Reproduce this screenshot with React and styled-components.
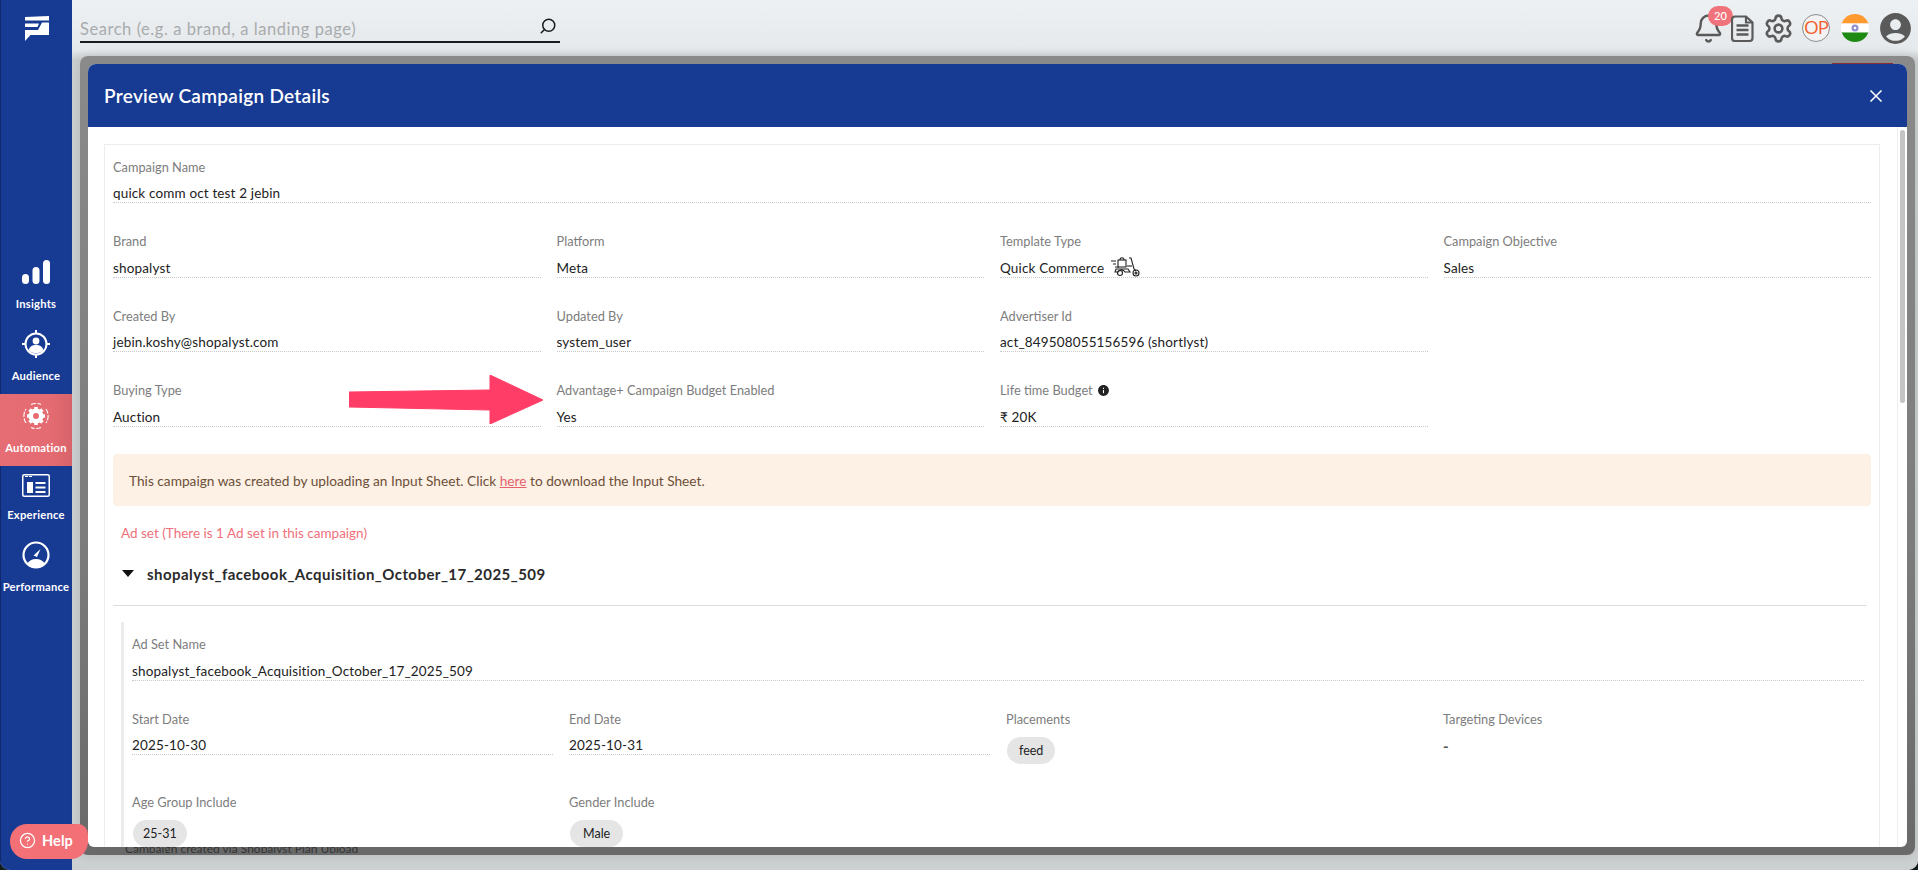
import React from "react";
import styled, { createGlobalStyle } from "styled-components";
import { Bell, Search, Settings, CircleHelp, X } from "lucide-react";
import { MdAccountCircle, MdInfo } from "react-icons/md";

const GlobalStyle = createGlobalStyle`
  html, body {
    margin: 0;
    padding: 0;
    height: 100%;
    overflow: hidden;
    background: #101c1c;
    font-family: Lato, "Open Sans", sans-serif;
  }
  * {
    box-sizing: border-box;
  }
`;

const Shell = styled.div`
  position: relative;
  display: flex;
  width: 1918px;
  height: 870px;
  overflow: hidden;
  border-radius: 0 0 10px 10px;
  background: #ccd0d0;
`;

const Sidebar = styled.aside`
  flex: 0 0 72px;
  display: flex;
  flex-direction: column;
  align-items: center;
  padding-top: 16px;
  background: #173a93;
  border-left: 1px solid #10296e;
  color: #fff;
`;

const LogoBox = styled.div`
  height: 25px;
  width: 24px;
  margin-bottom: 209px;
`;

const NavItem = styled.div`
  width: 72px;
  margin-left: -1px;
  height: ${(p) => (p.$tight ? "67px" : "72px")};
  padding-top: ${(p) => (p.$tight ? "5px" : "8px")};
  display: flex;
  flex-direction: column;
  align-items: center;
  background: ${(p) =>
    p.$active ? "linear-gradient(90deg, #e66d73, #e46b71 70%, #d8636a)" : "transparent"};
`;

const NavIcon = styled.div`
  height: 28px;
  display: flex;
  align-items: center;
  justify-content: center;
`;

const NavLabel = styled.div`
  margin-top: ${(p) => (p.$tight ? "8px" : "10px")};
  font-size: 11.2px;
  line-height: 16px;
  font-weight: 700;
  letter-spacing: 0.25px;
  white-space: nowrap;
`;

const Main = styled.main`
  flex: 1;
  min-width: 0;
  display: flex;
  flex-direction: column;
  background: linear-gradient(180deg, #eef1f3 0, #e6e9eb 50px, #ccd0d0 60px);
`;

const TopBar = styled.header`
  flex: 0 0 56px;
  display: flex;
  justify-content: space-between;
  padding: 13px 8px 0 8px;
`;

const SearchBox = styled.div`
  width: 480px;
  height: 30px;
  display: flex;
  align-items: center;
  justify-content: space-between;
  padding: 3px 3px 0 0;
  border-bottom: 2px solid #1b1b1b;
`;

const SearchHint = styled.span`
  font-size: 16.5px;
  letter-spacing: 0.55px;
  color: #a8abad;
`;

const FlippedSearch = styled(Search)`
  transform: scaleX(-1);
  margin-top: -5px;
  color: #1b1b1b;
`;

const TopIcons = styled.div`
  display: flex;
  align-items: flex-start;
  gap: 11px;
`;

const IconSlot = styled.div`
  position: relative;
  width: ${(p) => p.$w}px;
  height: 30px;
  display: flex;
  align-items: center;
  justify-content: center;
  color: #5a5a5a;

  svg {
    flex-shrink: 0;
  }
`;

const Badge = styled.span`
  position: absolute;
  top: -7px;
  left: 11px;
  width: 25px;
  height: 20px;
  border-radius: 10px;
  background: #f0737b;
  color: #fff;
  font-size: 11px;
  font-weight: 500;
  line-height: 20px;
  text-align: center;
`;

const OpCircle = styled.div`
  width: 28px;
  height: 28px;
  border-radius: 50%;
  border: 1px solid #8c8c8c;
  background: #f3f3f3;
  color: #f0602f;
  font-family: "Open Sans", sans-serif;
  font-size: 19px;
  font-weight: 400;
  line-height: 25px;
  letter-spacing: -1px;
  text-align: center;
  overflow: hidden;
  white-space: nowrap;
`;

const Backdrop = styled.section`
  position: relative;
  height: 799px;
  margin-right: 3px;
  margin-left: 8px;
  padding: 8px;
  border-radius: 8px;
  background: linear-gradient(180deg, #8a8a8a 0, #7c7c7c 60%, #696969 100%);
  box-shadow: 0 0 12px rgba(0, 0, 0, 0.12);
`;

const PeekText = styled.div`
  position: absolute;
  left: 45px;
  bottom: 2px;
  height: 6px;
  font-size: 12px;
  line-height: 3px;
  overflow: hidden;
  color: #333;
`;

const PeekButton = styled.div`
  position: absolute;
  top: 7px;
  right: 22px;
  width: 61px;
  height: 2px;
  background: #8a2b33;
`;

const Modal = styled.div`
  position: relative;
  height: 100%;
  display: flex;
  flex-direction: column;
  border-radius: 8px 8px 6px 6px;
  background: #fff;
  overflow: hidden;
`;

const ModalHeader = styled.div`
  flex: 0 0 63px;
  display: flex;
  align-items: center;
  justify-content: space-between;
  padding: 0 21px 0 16px;
  background: #173a93;
  color: #fff;
`;

const ModalTitle = styled.h1`
  margin: 0;
  font-size: 19px;
  font-weight: 600;
  letter-spacing: 0.3px;
`;

const ModalBody = styled.div`
  flex: 1;
  min-height: 0;
  display: flex;
`;

const ScrollArea = styled.div`
  flex: 1;
  min-width: 0;
  overflow: hidden;
  padding: 17px 17px 0 16px;
`;

const Gutter = styled.div`
  flex: 0 0 10px;
  padding: 3px 2px 0;
  border-left: 1px solid #f0f0f0;
`;

const Thumb = styled.div`
  height: 273px;
  border-radius: 3px;
  background: #c4c4c4;
`;

const DetailBox = styled.div`
  border: 1px solid #ececec;
  border-bottom: none;
  padding: 12.5px 8px 0;
  min-height: 720px;
`;

const FieldGrid = styled.div`
  display: grid;
  grid-template-columns: repeat(4, 1fr);
  column-gap: 16px;
  row-gap: 29.1px;
  align-items: start;
`;

const Field = styled.div`
  grid-column: ${(p) => (p.$full ? "1 / -1" : "auto")};
  min-width: 0;
`;

const Label = styled.div`
  display: flex;
  align-items: center;
  gap: 4px;
  height: 18px;
  font-size: 12.8px;
  line-height: 18px;
  color: #7d7d7d;
`;

const Value = styled.div`
  display: flex;
  align-items: center;
  gap: 7px;
  height: 18px;
  margin-top: 9.5px;
  border-bottom: 1px dotted #c9c9c9;
  font-size: 13.5px;
  line-height: 17px;
  letter-spacing: 0.15px;
  color: #222;

  svg {
    margin-top: -3px;
  }
`;

const Note = styled.div`
  height: 52px;
  margin-top: 27.5px;
  padding: 0 16px;
  display: flex;
  align-items: center;
  border-radius: 4px;
  background: #fdf1e5;
  color: #6c4f38;
  font-size: 13.7px;
  white-space: pre;
`;

const NoteLink = styled.a`
  color: #e5626c;
  text-decoration: underline;
`;

const AdSetHeading = styled.div`
  margin: 18px 0 0 8px;
  font-size: 13.5px;
  line-height: 18px;
  color: #f1707a;
`;

const AccordionRow = styled.div`
  display: flex;
  align-items: center;
  gap: 13px;
  height: 64px;
  padding: 0 0 0 9px;
  margin-right: 4px;
  border-bottom: 1px solid #dedede;
  font-size: 15px;
  font-weight: 700;
  letter-spacing: 0.45px;
  color: #2a2a2a;
`;

const Caret = styled.span`
  width: 0;
  height: 0;
  border-left: 6px solid transparent;
  border-right: 6px solid transparent;
  border-top: 7px solid #111;
`;

const AdSetBody = styled.div`
  margin: 16px 7px 0 8px;
  padding: 13px 0 0 8px;
  border-left: 3px solid #ececec;
`;

const ChipRow = styled.div`
  display: flex;
  gap: 6px;
  margin-top: 9px;
`;

const Chip = styled.span`
  height: 27px;
  padding: 0 ${(p) => p.$pad || 12}px;
  margin-left: 1px;
  border-radius: 14px;
  background: #e5e5e5;
  color: #222;
  font-size: 12.5px;
  line-height: 27px;
`;

const Dash = styled.div`
  margin-top: 9px;
  font-size: 15px;
  font-weight: 700;
  line-height: 18px;
  color: #555;
`;

const HelpButton = styled.button`
  position: absolute;
  left: 10px;
  top: 824px;
  width: 78px;
  height: 35px;
  display: flex;
  align-items: center;
  gap: 6px;
  padding: 0 0 2px 9px;
  border: none;
  border-radius: 17px 10px 17px 17px;
  background: #f27076;
  color: #fff;
  font-family: inherit;
  font-size: 14.5px;
  font-weight: 700;
  letter-spacing: 0.1px;
`;

const ArrowOverlay = styled.svg`
  position: absolute;
  left: 349px;
  top: 375px;
`;

const Logo = () => (
  <svg width="24" height="25" viewBox="0 0 24 25" fill="#fff">
    <path d="M0 1 L24 0 V4.500 H0 Z" />
    <path d="M0 7.500 H14 L12.500 11 H0 Z" />
    <path d="M0 14 H13 L17 6.500 H24 V19 H5.500 L0 25 Z" />
  </svg>
);

const InsightsIcon = () => (
  <svg width="28" height="24" viewBox="0 0 28 24" fill="#fff">
    <rect x="0" y="14" width="7" height="10" rx="3.5" />
    <rect x="10.5" y="7" width="7" height="17" rx="3.5" />
    <rect x="21" y="0" width="7" height="24" rx="3.5" />
  </svg>
);

const AudienceIcon = () => (
  <svg width="28" height="28" viewBox="0 0 28 28" fill="none" stroke="#fff" strokeWidth="2">
    <circle cx="14" cy="14" r="10.5" />
    <path d="M14 0v4M14 24v4M0 14h4M24 14h4" />
    <circle cx="14" cy="11" r="3.4" fill="#fff" stroke="none" />
    <path d="M6.5 20c1.5-4 4-5 7.5-5s6 1 7.5 5c-2 2.2-4.500 3.300-7.500 3.300S8.500 22.200 6.500 20z" fill="#fff" stroke="none" />
  </svg>
);

const AutomationIcon = () => (
  <svg width="28" height="28" viewBox="0 0 28 28" fill="none">
    <path d="M4 21A12.500 12.500 0 0 1 4 7M9 2.500A12.500 12.500 0 0 1 19 2.500M24 7A12.500 12.500 0 0 1 24 21M19 25.500A12.500 12.500 0 0 1 9 25.500" stroke="#fff" strokeWidth="1.1" strokeDasharray="5 1.500" />
    <circle cx="14" cy="14" r="5.500" stroke="#fff" strokeWidth="4" />
    <path d="M14 5v18M5 14h18M7.600 7.600l12.800 12.800M20.400 7.600L7.600 20.400" stroke="#fff" strokeWidth="3.500" />
    <circle cx="14" cy="14" r="3" fill="#e56c72" />
  </svg>
);

const ExperienceIcon = () => (
  <svg width="28" height="23" viewBox="0 0 28 23" fill="none">
    <rect x="0.750" y="0.750" width="26.500" height="21.500" rx="1.500" stroke="#fff" strokeWidth="1.500" />
    <path d="M3 2.500h3M7 2.500h3" stroke="#fff" strokeWidth="1.200" />
    <rect x="5" y="8" width="6" height="11" fill="#fff" />
    <path d="M13.500 9h10M13.500 13.500h10M13.500 18h10" stroke="#fff" strokeWidth="2" />
  </svg>
);

const PerformanceIcon = () => (
  <svg width="28" height="28" viewBox="0 0 28 28" fill="none">
    <circle cx="14" cy="14" r="12.500" stroke="#fff" strokeWidth="2.200" />
    <path d="M5 23c2-3.500 5-5 9-5s7 1.500 9 5c-2.500 2.500-5.500 4-9 4s-6.500-1.500-9-4z" fill="#fff" />
    <path d="M11.500 14.500L18.500 8L15 16z" fill="#fff" />
  </svg>
);

const NotesIcon = () => (
  <svg width="23" height="27" viewBox="0 0 23 27" fill="none" stroke="#5a5a5a" strokeWidth="2.200">
    <path d="M4 1.500h11l6.500 6v15.500a3 3 0 0 1-3 3H4a3 3 0 0 1-3-3V4.500a3 3 0 0 1 3-3z" />
    <path d="M15 1.500v6h6.500" />
    <path d="M5.500 10.500h12M5.500 15h12M5.500 19.500h12" strokeWidth="2.400" />
  </svg>
);

const IndiaFlag = () => (
  <svg width="28" height="28" viewBox="0 0 28 28">
    <defs>
      <clipPath id="flagClip">
        <circle cx="14" cy="14" r="14" />
      </clipPath>
    </defs>
    <g clipPath="url(#flagClip)">
      <rect width="28" height="9.500" fill="#ff9a2e" />
      <rect y="9.500" width="28" height="9" fill="#fff" />
      <rect y="18.500" width="28" height="9.500" fill="#1f8a12" />
      <circle cx="14" cy="14" r="3.500" fill="#8f8fd0" />
      <circle cx="14" cy="14" r="1.300" fill="#fff" />
    </g>
  </svg>
);

const ScooterIcon = () => (
  <svg width="30" height="20" viewBox="0 0 30 20" fill="none" stroke="#222" strokeWidth="1.100">
    <path d="M0 4h5M2 7h3M4 10h4" />
    <rect x="7" y="3" width="8" height="7" />
    <path d="M9 3c0-3 4-3 4 0" />
    <path d="M5 12h12l2 3h-5a4 4 0 0 0-7 0H4z" />
    <circle cx="9" cy="16" r="2.500" />
    <path d="M18 1l2 0 3 11 2 2" />
    <path d="M16 9h5" />
    <circle cx="25" cy="16" r="3" />
    <circle cx="25" cy="16" r="1" />
  </svg>
);

const campaignRows = [
  { label: "Brand", value: "shopalyst" },
  { label: "Platform", value: "Meta" },
  { label: "Template Type", value: "Quick Commerce", icon: <ScooterIcon /> },
  { label: "Campaign Objective", value: "Sales" },
  { label: "Created By", value: "jebin.koshy@shopalyst.com" },
  { label: "Updated By", value: "system_user" },
  { label: "Advertiser Id", value: "act_849508055156596 (shortlyst)" },
  { spacer: true },
  { label: "Buying Type", value: "Auction" },
  { label: "Advantage+ Campaign Budget Enabled", value: "Yes" },
  { label: "Life time Budget", value: "₹ 20K", info: true },
];

const navItems = [
  { label: "Insights", icon: <InsightsIcon /> },
  { label: "Audience", icon: <AudienceIcon /> },
  { label: "Automation", icon: <AutomationIcon />, active: true },
  { label: "Experience", icon: <ExperienceIcon />, tight: true },
  { label: "Performance", icon: <PerformanceIcon /> },
];

const App = () => {
  return (
    <Shell>
      <GlobalStyle />
      <Sidebar>
        <LogoBox>
          <Logo />
        </LogoBox>
        {navItems.map((item) => (
          <NavItem key={item.label} $active={item.active} $tight={item.tight}>
            <NavIcon>{item.icon}</NavIcon>
            <NavLabel $tight={item.tight}>{item.label}</NavLabel>
          </NavItem>
        ))}
      </Sidebar>
      <Main>
        <TopBar>
          <SearchBox>
            <SearchHint>Search (e.g. a brand, a landing page)</SearchHint>
            <FlippedSearch size={18} strokeWidth={2} />
          </SearchBox>
          <TopIcons>
            <IconSlot $w={23}>
              <Bell size={31} strokeWidth={1.9} />
              <Badge>20</Badge>
            </IconSlot>
            <IconSlot $w={23}>
              <NotesIcon />
            </IconSlot>
            <IconSlot $w={26}>
              <Settings size={31} strokeWidth={2} />
            </IconSlot>
            <IconSlot $w={28}>
              <OpCircle>OP</OpCircle>
            </IconSlot>
            <IconSlot $w={28}>
              <IndiaFlag />
            </IconSlot>
            <IconSlot $w={30}>
              <MdAccountCircle size={37} />
            </IconSlot>
          </TopIcons>
        </TopBar>
        <Backdrop>
          <PeekButton />
          <PeekText>Campaign created via Shopalyst Plan Upload</PeekText>
          <Modal>
            <ModalHeader>
              <ModalTitle>Preview Campaign Details</ModalTitle>
              <X size={20} strokeWidth={2} />
            </ModalHeader>
            <ModalBody>
              <ScrollArea>
                <DetailBox>
                  <FieldGrid>
                    <Field $full>
                      <Label>Campaign Name</Label>
                      <Value>quick comm oct test 2 jebin</Value>
                    </Field>
                    {campaignRows.map((row, i) =>
                      row.spacer ? (
                        <div key={i} />
                      ) : (
                        <Field key={row.label}>
                          <Label>
                            {row.label}
                            {row.info && <MdInfo size={13} color="#222" />}
                          </Label>
                          <Value>
                            {row.value}
                            {row.icon}
                          </Value>
                        </Field>
                      )
                    )}
                  </FieldGrid>
                  <Note>
                    This campaign was created by uploading an Input Sheet. Click <NoteLink>here</NoteLink> to download the Input Sheet.
                  </Note>
                  <AdSetHeading>Ad set (There is 1 Ad set in this campaign)</AdSetHeading>
                  <AccordionRow>
                    <Caret />
                    shopalyst_facebook_Acquisition_October_17_2025_509
                  </AccordionRow>
                  <AdSetBody>
                    <FieldGrid>
                      <Field $full>
                        <Label>Ad Set Name</Label>
                        <Value>shopalyst_facebook_Acquisition_October_17_2025_509</Value>
                      </Field>
                      <Field>
                        <Label>Start Date</Label>
                        <Value>2025-10-30</Value>
                      </Field>
                      <Field>
                        <Label>End Date</Label>
                        <Value>2025-10-31</Value>
                      </Field>
                      <Field>
                        <Label>Placements</Label>
                        <ChipRow>
                          <Chip>feed</Chip>
                        </ChipRow>
                      </Field>
                      <Field>
                        <Label>Targeting Devices</Label>
                        <Dash>-</Dash>
                      </Field>
                      <Field>
                        <Label>Age Group Include</Label>
                        <ChipRow>
                          <Chip $pad={10}>25-31</Chip>
                        </ChipRow>
                      </Field>
                      <Field>
                        <Label>Gender Include</Label>
                        <ChipRow>
                          <Chip $pad={13}>Male</Chip>
                        </ChipRow>
                      </Field>
                    </FieldGrid>
                  </AdSetBody>
                </DetailBox>
              </ScrollArea>
              <Gutter>
                <Thumb />
              </Gutter>
            </ModalBody>
          </Modal>
        </Backdrop>
      </Main>
      <ArrowOverlay width="194" height="49" viewBox="0 0 194 49">
        <path d="M0 17 L141 15 L141 0 L194 25 L141 49 L141 35 L0 32 Z" fill="#ff3d67" stroke="#ff3d67" strokeLinejoin="round" />
      </ArrowOverlay>
      <HelpButton>
        <CircleHelp size={17} strokeWidth={1.8} />
        Help
      </HelpButton>
    </Shell>
  );
};

export default App;
